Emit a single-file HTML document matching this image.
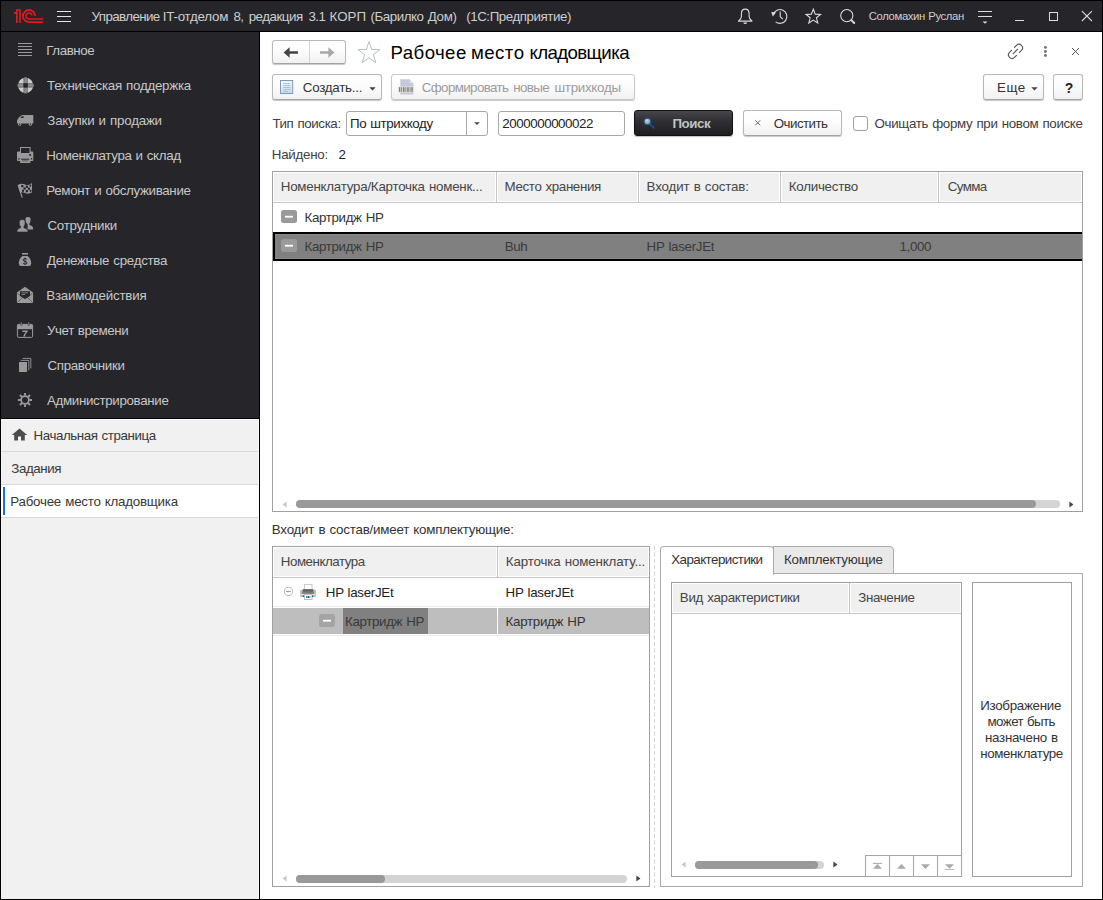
<!DOCTYPE html>
<html lang="ru">
<head>
<meta charset="utf-8">
<title>Рабочее место кладовщика</title>
<style>
*{box-sizing:border-box;margin:0;padding:0}
html,body{width:1103px;height:900px;overflow:hidden;background:#000}
body{font-family:"Liberation Sans",sans-serif;font-size:13px;color:#333;position:relative}
.abs{position:absolute}
#win{position:absolute;left:1px;top:1px;width:1101px;height:898px;background:#fff;overflow:hidden}
/* coordinates inside #win are page coords minus 1 */
#topbar{position:absolute;left:0;top:0;width:1101px;height:30px;background:#25252a}
#topline{position:absolute;left:0;top:30px;width:1101px;height:1px;background:#000}
#side{position:absolute;left:0;top:31px;width:258px;height:386px;background:#25252a}
#sideline{position:absolute;left:0;top:417px;width:258px;height:1px;background:#000}
#sidelow{position:absolute;left:0;top:418px;width:258px;height:480px;background:#f1f1f1;border-top:1px solid #fbfbfb;border-right:1px solid #fbfbfb}
#sideborder{position:absolute;left:258px;top:31px;width:1px;height:867px;background:#000}
.orow{position:absolute;left:0;width:257px;height:33px;border-bottom:1px solid #d9d9d9;font-size:13px;color:#333;line-height:16px;white-space:nowrap}
.t{position:absolute;white-space:pre;line-height:16px}
.btn{position:absolute;border:1px solid #b9b9b9;border-bottom-color:#a2a2a2;border-radius:3px;background:linear-gradient(#ffffff,#fdfdfd 40%,#f1f1f1);box-shadow:0 1px 1px rgba(0,0,0,.22)}
.inp{position:absolute;border:1px solid #a8a8a8;border-radius:3px;background:#fff}
.tbl{position:absolute;border:1px solid #a0a0a0;background:#fff}
</style>
</head>
<body>
<div id="win">
<div id="topbar"></div>
<div id="topline"></div>
<div id="side"></div>
<div id="sideline"></div>
<div id="sidelow"></div>
<div id="sideborder"></div>
<!-- ===== TOP BAR (coords = page-1) ===== -->
<svg class="abs" style="left:0px;top:0px" width="50" height="30" viewBox="1 1 50 30">
 <g fill="none" stroke="#dc1a1f">
  <path d="M16.85 23 V10 H19.95 V23" stroke-width="1.7"/>
  <path d="M13.9 12.9 H16.2" stroke-width="1.9"/>
  <path d="M35.05 16 A6.05 6.05 0 1 0 29 22.1 H43.3" stroke-width="1.85"/>
  <path d="M31.9 15.4 A2.95 2.95 0 1 0 29 18.95 H43.3" stroke-width="1.6"/>
 </g>
</svg>
<div class="abs" style="left:56px;top:10px;width:14px;height:1px;background:#e4e4e4"></div>
<div class="abs" style="left:56px;top:15px;width:14px;height:1px;background:#e4e4e4"></div>
<div class="abs" style="left:56px;top:20px;width:14px;height:1px;background:#e4e4e4"></div>
<!-- icons (page coords) -->
<svg class="abs" style="left:729px;top:0px" width="140" height="30" viewBox="730 1 140 30">
 <g fill="none" stroke="#dcdcdc" stroke-width="1.1" stroke-linejoin="round">
  <path d="M745.2 9.1 C742.9 9.1 741.4 11 741.4 13.6 V16.6 C741.4 18.8 739.6 20 738.5 21.1 H752 C750.9 20 749.1 18.8 749.1 16.6 V13.6 C749.1 11 747.5 9.1 745.2 9.1 Z"/>
  <path d="M773.4 14.5 A6.9 6.9 0 1 1 775.6 21.8"/>
  <path d="M780.2 11.6 V16.6 L782.8 19.2"/>
  <path d="M813.30 9.20 L815.24 14.13 L820.53 14.45 L816.44 17.82 L817.77 22.95 L813.30 20.10 L808.83 22.95 L810.16 17.82 L806.07 14.45 L811.36 14.13 Z" stroke-linejoin="miter"/>
  <circle cx="846.8" cy="15.6" r="6.1"/>
 </g>
 <path d="M743.3 22.4 H747.1 Q747.1 23.9 745.2 23.9 Q743.3 23.9 743.3 22.4 Z" fill="#dcdcdc"/>
 <path d="M771.2 12 L776 12.6 L772.8 16.4 Z" fill="#dcdcdc"/>
 <path d="M851.3 20.1 L854.2 23" stroke="#dcdcdc" stroke-width="2" stroke-linecap="round"/>
</svg>
<!-- menu lines -->
<div class="abs" style="left:977px;top:10px;width:14px;height:1px;background:#dcdcdc"></div>
<div class="abs" style="left:977px;top:15px;width:14px;height:1px;background:#dcdcdc"></div>
<svg class="abs" style="left:980px;top:20px" width="9" height="4" viewBox="0 0 9 4"><path d="M1.5 0.6 H6.5 L4 2.8 Z" fill="#dcdcdc"/></svg>
<!-- minimize -->
<div class="abs" style="left:1014px;top:19px;width:9px;height:1px;background:#dcdcdc"></div>
<!-- maximize -->
<div class="abs" style="left:1048px;top:11px;width:9px;height:9px;border:1px solid #dcdcdc"></div>
<!-- close -->
<svg class="abs" style="left:1080px;top:9px" width="12" height="12" viewBox="0 0 12 12"><path d="M0.9 1.2 L10.9 11 M10.9 1.2 L0.9 11" stroke="#dcdcdc" stroke-width="1.1"/></svg>

<!-- ===== SIDEBAR (coords = page-1) ===== -->
<!-- icons: one svg overlay, viewBox in page coords -->
<svg class="abs" style="left:0;top:31px" width="50" height="386" viewBox="1 32 50 386">
 <!-- list -->
 <g fill="#9a9a9a">
  <rect x="18" y="43" width="14" height="1"/><rect x="18" y="46" width="14" height="1"/><rect x="18" y="49" width="14" height="1"/><rect x="18" y="52" width="14" height="1"/><rect x="18" y="55" width="14" height="1"/>
 </g>
 <!-- lifebuoy -->
 <g>
  <circle cx="25.6" cy="85.4" r="7.7" fill="#cdcdcd"/>
  <rect x="24" y="77.4" width="3.2" height="16" fill="#8c8c8c"/>
  <rect x="17.6" y="83.8" width="16" height="3.2" fill="#8c8c8c"/>
  <g stroke="#25252a" stroke-width="0.6" opacity=".8"><path d="M23.8 77 V94 M27.4 77 V94 M17 83.6 H34 M17 87.2 H34"/></g>
  <rect x="23.5" y="83.3" width="4.2" height="4.2" rx="1" fill="#25252a"/>
 </g>
 <!-- truck -->
 <g fill="#9a9a9a">
  <path d="M22 115 H33.3 V123.6 H17 V120.2 L19.2 117.2 Z"/>
  <circle cx="19.7" cy="124.2" r="1.6"/><circle cx="30.4" cy="124.2" r="1.6"/>
  <path d="M20.4 118 L22 116.2 H23.6 V118 Z" fill="#25252a"/>
  <circle cx="19.7" cy="124.3" r="0.7" fill="#25252a"/><circle cx="30.4" cy="124.3" r="0.7" fill="#25252a"/>
 </g>
 <!-- printer -->
 <g>
  <rect x="20.5" y="147.5" width="9.6" height="6" fill="none" stroke="#9a9a9a" stroke-width="1"/>
  <path d="M18 151.6 H20.8 V153.2 H29.8 V151.6 H32.4 Q33.3 151.6 33.3 152.6 V160 Q33.3 161 32.4 161 H18 Q17 161 17 160 V152.6 Q17 151.6 18 151.6 Z" fill="#9a9a9a"/>
  <rect x="20.1" y="157.6" width="10.3" height="5.4" rx="0.6" fill="#9a9a9a"/>
  <rect x="21.2" y="158.7" width="8" height="1" fill="#25252a"/>
  <rect x="22" y="160.4" width="6.4" height="1" fill="#25252a" opacity=".55"/>
  <rect x="29.3" y="154" width="1.8" height="1.8" fill="#25252a"/>
  <rect x="18.3" y="158.2" width="1.3" height="1.4" fill="#25252a"/><rect x="30.9" y="158.2" width="1.3" height="1.4" fill="#25252a"/>
 </g>
 <!-- flag -->
 <g>
  <path d="M18 185 Q21 182.6 25 184.4 T32 183 V192.6 Q28 194.6 25 193 T20.4 193.2 Z" fill="#9a9a9a"/>
  <path d="M18.1 185 L22.2 197.6" stroke="#9a9a9a" stroke-width="1.1" fill="none"/>
  <g fill="#25252a">
   <rect x="21.2" y="185" width="2.2" height="2.2"/><rect x="25.8" y="185.6" width="2.2" height="2.2"/><rect x="29.6" y="184.6" width="1.6" height="2"/>
   <rect x="23.4" y="187.4" width="2.3" height="2.2"/><rect x="27.8" y="187.6" width="2.2" height="2.2"/>
   <rect x="22" y="189.8" width="2" height="2"/><rect x="25.8" y="190" width="2.2" height="2.2"/><rect x="29.8" y="189.8" width="1.6" height="2"/>
  </g>
 </g>
 <!-- people -->
 <g fill="#9a9a9a">
  <path d="M25.4 219.4 Q25.4 217 28 217 Q30.6 217 30.6 219.4 Q30.6 222.4 29.4 223.6 V225 Q33 226 33 228 V229.4 H27.6 V224.6 Q25.4 222.6 25.4 219.4 Z"/>
  <path d="M19.2 222.2 Q19.2 219.4 22.2 219.4 Q25.2 219.4 25.2 222.2 Q25.2 225.4 23.9 226.6 V227.8 Q28 228.8 28 231 V232 H17 V231 Q17 228.8 20.5 227.8 V226.6 Q19.2 225.4 19.2 222.2 Z" stroke="#25252a" stroke-width="0.6"/>
 </g>
 <!-- money bag -->
 <g fill="#9a9a9a">
  <rect x="22" y="253" width="6" height="1.6"/>
  <path d="M22.4 256 H27.6 Q31.2 259 31.2 263.4 Q31.2 266 29 266 H21 Q18.8 266 18.8 263.4 Q18.8 259 22.4 256 Z"/>
  <g fill="none" stroke="#25252a" stroke-width="0.95"><path d="M26.9 259.6 Q26.6 258.6 25 258.6 Q23.2 258.6 23.2 259.9 Q23.2 261 25 261.3 Q26.9 261.6 26.9 262.8 Q26.9 264.1 25 264.1 Q23.3 264.1 23 263"/><path d="M25 257.6 V265.1" stroke-width="0.8"/></g>
 </g>
 <!-- envelope -->
 <g>
  <path d="M25 286.8 L33.1 292.4 V302 Q33.1 303 32.1 303 H17.9 Q16.9 303 16.9 302 V292.4 Z" fill="#9a9a9a"/>
  <path d="M20 291.2 H30 V296 L25 299 L20 296 Z" fill="#25252a"/>
  <rect x="21.6" y="292.4" width="6.4" height="0.9" fill="#8a8a8a"/><rect x="21.6" y="294.1" width="3.4" height="0.9" fill="#8a8a8a"/>
  <path d="M17.6 293.6 L25 298.4 L32.4 293.6 M17.6 302.2 L22.6 297.4 M32.4 302.2 L27.4 297.4" stroke="#25252a" stroke-width="0.6" fill="none" opacity=".8"/>
 </g>
 <!-- calendar -->
 <g>
  <rect x="17.4" y="324.4" width="15.2" height="13" rx="1.2" fill="none" stroke="#9a9a9a" stroke-width="1"/>
  <rect x="17.4" y="324.4" width="15.2" height="4.8" fill="#9a9a9a"/>
  <rect x="20.6" y="322" width="1.4" height="3.6" rx=".7" fill="#9a9a9a" stroke="#25252a" stroke-width=".5"/>
  <rect x="28" y="322" width="1.4" height="3.6" rx=".7" fill="#9a9a9a" stroke="#25252a" stroke-width=".5"/>
  <path d="M22.4 330.4 H27.8 V331.6 Q25.6 333.6 25 336.4 H23.2 Q23.9 333.8 25.8 332 H22.4 Z" fill="#9a9a9a"/>
 </g>
 <!-- docs -->
 <g>
  <rect x="19" y="362" width="8" height="10" fill="#9a9a9a"/>
  <path d="M20.6 360.4 H28.8 V370.4" fill="none" stroke="#9a9a9a" stroke-width="0.9"/>
  <path d="M22.6 358.4 H30.8 V368.4" fill="none" stroke="#9a9a9a" stroke-width="0.9"/>
 </g>
 <!-- gear -->
 <g stroke="#9a9a9a" fill="none">
  <circle cx="25" cy="400" r="3.9" stroke-width="1.8"/>
  <path d="M29.40 400.00 L32.10 400.00 M28.11 403.11 L30.02 405.02 M25.00 404.40 L25.00 407.10 M21.89 403.11 L19.98 405.02 M20.60 400.00 L17.90 400.00 M21.89 396.89 L19.98 394.98 M25.00 395.60 L25.00 392.90 M28.11 396.89 L30.02 394.98" stroke-width="1.9"/>
 </g>
</svg>
<!-- open windows list -->
<div class="orow" style="top:418px"></div>
<div class="orow" style="top:451px"></div>
<div class="orow" style="top:484px;background:#fff"></div>
<div class="abs" style="left:2px;top:486px;width:2px;height:28px;background:#1576cf"></div>
<svg class="abs" style="left:10px;top:427px" width="17" height="13" viewBox="0 0 17 13"><path d="M8.5 0.4 L16.2 7 H13.8 V12.6 H10 V8.4 H7 V12.6 H3.2 V7 H0.8 Z" fill="#4d4d4d"/></svg>

<!-- ===== MAIN (coords = page-1) ===== -->
<!-- nav buttons -->
<div class="btn" style="left:271px;top:39px;width:74px;height:24px"></div>
<div class="abs" style="left:308px;top:40px;width:1px;height:22px;background:#d4d4d4"></div>
<svg class="abs" style="left:282px;top:45px" width="16" height="13" viewBox="0 0 16 13"><path d="M0.6 6.5 L6.6 1.2 V5.3 H15 V7.7 H6.6 V11.8 Z" fill="#444"/></svg>
<svg class="abs" style="left:318px;top:45px" width="16" height="13" viewBox="0 0 16 13"><path d="M15.4 6.5 L9.4 1.2 V5.3 H1 V7.7 H9.4 V11.8 Z" fill="#a8a8a8"/></svg>
<!-- star -->
<svg class="abs" style="left:354px;top:38px" width="30" height="28" viewBox="355 39 30 28"><path d="M369.00 41.60 L371.70 49.48 L380.03 49.62 L373.37 54.62 L375.82 62.58 L369.00 57.80 L362.18 62.58 L364.63 54.62 L357.97 49.62 L366.30 49.48 Z" fill="#fff" stroke="#b9c0c8" stroke-width="1"/></svg>
<!-- link / dots / close -->
<svg class="abs" style="left:1003px;top:39px" width="82" height="24" viewBox="1004 40 82 24">
 <g transform="translate(1015.5 51.35) rotate(-45)" fill="none" stroke="#585858" stroke-width="1.15" stroke-linecap="round">
  <path d="M2.1 -3.5 H4.9 A3.5 3.5 0 0 1 4.9 3.5 H2.1"/>
  <path d="M-2.1 -3.5 H-4.9 A3.5 3.5 0 0 0 -4.9 3.5 H-2.1"/>
  <path d="M-3.3 0 H3.1"/>
 </g>
 <g fill="#757575"><circle cx="1045.4" cy="47.4" r="1.45"/><circle cx="1045.4" cy="51.5" r="1.45"/><circle cx="1045.4" cy="55.5" r="1.45"/></g>
 <path d="M1072 48 L1079 55 M1079 48 L1072 55" stroke="#555" stroke-width="1"/>
</svg>

<!-- toolbar row -->
<div class="btn" style="left:271px;top:73px;width:110px;height:26px"></div>
<svg class="abs" style="left:278px;top:78px" width="17" height="18" viewBox="279 79 17 18">
 <defs><linearGradient id="dg" x1="0" y1="0" x2="0.3" y2="1"><stop offset="0" stop-color="#ffffff"/><stop offset="1" stop-color="#c9dcec"/></linearGradient></defs>
 <rect x="280.5" y="80.5" width="12.2" height="13" fill="url(#dg)" stroke="#7d9ab8" stroke-width="1"/>
 <g stroke="#a9bccd" stroke-width="0.9"><path d="M283 83.5 H290.4 M283 85.5 H290.4 M283 87.5 H290.4 M283 89.5 H290.4 M283 91.5 H288"/></g>
</svg>
<svg class="abs" style="left:368px;top:86px" width="7" height="4" viewBox="0 0 7 4"><path d="M0.3 0.3 H6.7 L3.5 3.6 Z" fill="#444"/></svg>
<div class="btn" style="left:390px;top:73px;width:244px;height:26px;border-color:#c8c8c8"></div>
<svg class="abs" style="left:396px;top:77px" width="20" height="20" viewBox="397 78 20 20">
 <path d="M400.3 79.2 H409.6 L413.3 83 V94.6 H400.3 Z" fill="#c3cbd6"/>
 <path d="M409.6 79.2 V83 H413.3 Z" fill="#dfe4ea"/>
 <rect x="398" y="86.4" width="16.2" height="6" fill="#e3e1dc"/>
 <g fill="#7e7e7e"><rect x="399" y="87.2" width="1.3" height="4.6"/><rect x="401.2" y="87.2" width="0.9" height="4.6"/><rect x="403" y="87.2" width="1.5" height="4.6"/><rect x="405.4" y="87.2" width="0.9" height="4.6"/><rect x="407.2" y="87.2" width="1.5" height="4.6"/><rect x="409.6" y="87.2" width="0.9" height="4.6"/><rect x="411.3" y="87.2" width="1.4" height="4.6"/></g>
</svg>
<div class="btn" style="left:982px;top:73px;width:61px;height:26px"></div>
<svg class="abs" style="left:1030px;top:86px" width="7" height="4" viewBox="0 0 7 4"><path d="M0.3 0.3 H6.7 L3.5 3.6 Z" fill="#444"/></svg>
<div class="btn" style="left:1052px;top:73px;width:30px;height:26px"></div>

<!-- search row -->
<div class="inp" style="left:345px;top:110px;width:142px;height:25px"></div>
<div class="abs" style="left:465px;top:111px;width:1px;height:23px;background:#a8a8a8"></div>
<svg class="abs" style="left:473px;top:121px" width="6" height="3" viewBox="0 0 6 3"><path d="M0.2 0.2 H5.8 L3 2.9 Z" fill="#444"/></svg>
<div class="inp" style="left:497px;top:110px;width:127px;height:25px"></div>
<div class="abs" style="left:633px;top:109px;width:99px;height:26px;border:1px solid #111;border-radius:3px;background:linear-gradient(#47474b,#303034 40%,#1e1e22);box-shadow:0 1px 1px rgba(0,0,0,.25)"></div>
<svg class="abs" style="left:640px;top:114px" width="18" height="18" viewBox="641 115 18 18">
 <defs><radialGradient id="lg" cx="0.4" cy="0.35" r="0.7"><stop offset="0" stop-color="#d2d2d2"/><stop offset="1" stop-color="#8a8a8a"/></radialGradient></defs>
 <path d="M649.6 123.6 L653.9 127.8" stroke="#0f5590" stroke-width="1.7" stroke-linecap="round"/>
 <circle cx="647.4" cy="121.5" r="3.3" fill="url(#lg)" stroke="#115a98" stroke-width="1.1"/>
</svg>
<div class="btn" style="left:742px;top:109px;width:99px;height:26px"></div>
<svg class="abs" style="left:753px;top:118px" width="8" height="8" viewBox="0 0 8 8"><path d="M1.4 1.4 L6.2 6.2 M6.2 1.4 L1.4 6.2" stroke="#5a5a5a" stroke-width="0.9"/></svg>
<div class="abs" style="left:852px;top:115px;width:15px;height:15px;border:1px solid #a0a0a0;border-radius:3px;background:#fff"></div>

<!-- table 1 -->
<div class="tbl" style="left:271px;top:170px;width:811px;height:341px"></div>
<div class="abs" style="left:272px;top:171px;width:809px;height:31px;background:#c6c6c6"></div>
<div class="abs" style="left:272px;top:171px;width:223px;height:30px;background:#f0f0f0;border:1px solid #fff"></div>
<div class="abs" style="left:496px;top:171px;width:141px;height:30px;background:#f0f0f0;border:1px solid #fff"></div>
<div class="abs" style="left:638px;top:171px;width:141px;height:30px;background:#f0f0f0;border:1px solid #fff"></div>
<div class="abs" style="left:780px;top:171px;width:157px;height:30px;background:#f0f0f0;border:1px solid #fff"></div>
<div class="abs" style="left:938px;top:171px;width:143px;height:30px;background:#f0f0f0;border:1px solid #fff"></div>
<!-- row 1 -->
<svg class="abs" style="left:280px;top:209px" width="16" height="13" viewBox="0 0 16 13"><rect x="0" y="0" width="16" height="13" rx="2.5" fill="#9a9a9a"/><rect x="4" y="5.8" width="8" height="1.8" fill="#fff"/></svg>
<!-- row 2 selected -->
<div class="abs" style="left:272px;top:231px;width:809px;height:29px;background:#808080;border:2px solid #000;border-right:0;box-shadow:inset 0 1px 0 #8a8a8a,inset 0 -1px 0 #8a8a8a"></div>
<svg class="abs" style="left:280px;top:238px" width="16" height="13" viewBox="0 0 16 13"><rect x="0" y="0" width="16" height="13" rx="2.5" fill="#9a9a9a"/><rect x="4" y="5.8" width="8" height="1.8" fill="#fff"/></svg>
<!-- scrollbar 1 -->
<svg class="abs" style="left:281px;top:500px" width="5" height="7" viewBox="0 0 5 7"><path d="M4.6 0.4 V6.6 L0.6 3.5 Z" fill="#c8c8c8"/></svg>
<div class="abs" style="left:295px;top:499px;width:764px;height:8px;border-radius:4px;background:#d4d4d4"></div>
<div class="abs" style="left:295px;top:499px;width:740px;height:8px;border-radius:4px;background:#999"></div>
<svg class="abs" style="left:1068px;top:500px" width="5" height="7" viewBox="0 0 5 7"><path d="M0.4 0.4 V6.6 L4.4 3.5 Z" fill="#444"/></svg>


<!-- table 2 -->
<div class="tbl" style="left:271px;top:545px;width:378px;height:341px"></div>
<div class="abs" style="left:272px;top:546px;width:376px;height:31px;background:#c6c6c6"></div>
<div class="abs" style="left:272px;top:546px;width:224px;height:30px;background:#f0f0f0;border:1px solid #fff"></div>
<div class="abs" style="left:497px;top:546px;width:151px;height:30px;background:#f0f0f0;border:1px solid #fff"></div>
<!-- row 1 -->
<svg class="abs" style="left:282px;top:585px" width="12" height="12" viewBox="283 586 12 12"><circle cx="288.5" cy="591.4" r="4.1" fill="#fff" stroke="#b4b4b4" stroke-width="1"/><path d="M286 591.4 H291" stroke="#999" stroke-width="1"/></svg>
<svg class="abs" style="left:298px;top:582px" width="20" height="19" viewBox="299 583 20 19">
 <defs><linearGradient id="pg" x1="0" y1="0" x2="0" y2="1"><stop offset="0" stop-color="#4e4e4e"/><stop offset="1" stop-color="#8e8e8e"/></linearGradient></defs>
 <rect x="304.4" y="584.4" width="7.6" height="6" fill="#fff" stroke="#c4c4c4" stroke-width="0.9"/>
 <path d="M301.6 589.4 H314.4 Q316 589.4 316 591 V596 Q316 597 315 597 H301 Q300 597 300 596 V591 Q300 589.4 301.6 589.4 Z" fill="#b9c0c8"/>
 <path d="M303 589.2 H313 L314.2 594 H301.8 Z" fill="url(#pg)"/>
 <rect x="300.6" y="594" width="14.8" height="1" fill="#dfe3e8"/>
 <rect x="304.4" y="594.6" width="7.6" height="5" fill="#fff" stroke="#b4b4b4" stroke-width="0.9"/>
 <rect x="306" y="596" width="1.6" height="2" fill="#2b8fe0"/><rect x="307.8" y="596" width="1.6" height="2" fill="#1f7a46"/><rect x="309.4" y="596" width="1" height="2" fill="#3aa0e0"/>
 <rect x="314" y="592.4" width="1.2" height="1.2" fill="#7fe36a"/>
 <path d="M302.6 596.8 L303.6 595 L304 596.8 Z M313.4 596.8 L312.4 595 L312 596.8 Z" fill="#222"/>
</svg>
<div class="abs" style="left:272px;top:605px;width:376px;height:1px;background:#ececec"></div>
<!-- row 2 -->
<div class="abs" style="left:272px;top:607px;width:376px;height:26px;background:#bebebe"></div>
<div class="abs" style="left:342px;top:607px;width:85px;height:26px;background:#808080"></div>
<div class="abs" style="left:496px;top:577px;width:1px;height:58px;background:#fff"></div>
<div class="abs" style="left:272px;top:634px;width:376px;height:1px;background:#ececec"></div>
<svg class="abs" style="left:318px;top:613px" width="16" height="13" viewBox="0 0 16 13"><rect x="0" y="0" width="16" height="13" rx="3" fill="#a4a4a4"/><rect x="4" y="5.8" width="8" height="1.8" fill="#fff"/></svg>
<!-- scrollbar 2 -->
<svg class="abs" style="left:281px;top:874px" width="5" height="7" viewBox="0 0 5 7"><path d="M4.6 0.4 V6.6 L0.6 3.5 Z" fill="#c8c8c8"/></svg>
<div class="abs" style="left:295px;top:874px;width:331px;height:8px;border-radius:4px;background:#d4d4d4"></div>
<div class="abs" style="left:295px;top:874px;width:89px;height:8px;border-radius:4px;background:#999"></div>
<svg class="abs" style="left:635px;top:874px" width="5" height="7" viewBox="0 0 5 7"><path d="M0.4 0.4 V6.6 L4.4 3.5 Z" fill="#444"/></svg>

<!-- splitter -->
<svg class="abs" style="left:653px;top:545px" width="1" height="342" viewBox="0 0 1 342"><path d="M0.5 0 V342" stroke="#d2d2d2" stroke-width="1" stroke-dasharray="4 2.4"/></svg>

<!-- tabs -->
<div class="abs" style="left:659px;top:572px;width:423px;height:314px;border:1px solid #ababab;background:#fff"></div>
<div class="abs" style="left:772px;top:545px;width:121px;height:28px;border:1px solid #ababab;border-radius:0 4px 0 0;background:#e9e9e9"></div>
<div class="abs" style="left:659px;top:545px;width:114px;height:29px;border:1px solid #ababab;border-bottom:0;border-radius:4px 4px 0 0;background:#fff"></div>
<!-- inner table -->
<div class="tbl" style="left:670px;top:581px;width:291px;height:295px"></div>
<div class="abs" style="left:671px;top:582px;width:289px;height:31px;background:#c6c6c6"></div>
<div class="abs" style="left:671px;top:582px;width:177px;height:30px;background:#f0f0f0;border:1px solid #fff"></div>
<div class="abs" style="left:849px;top:582px;width:111px;height:30px;background:#f0f0f0;border:1px solid #fff"></div>
<!-- inner scrollbar -->
<svg class="abs" style="left:680px;top:860px" width="5" height="7" viewBox="0 0 5 7"><path d="M4.6 0.4 V6.6 L0.6 3.5 Z" fill="#c8c8c8"/></svg>
<div class="abs" style="left:694px;top:860px;width:129px;height:8px;border-radius:4px;background:#d4d4d4"></div>
<div class="abs" style="left:694px;top:860px;width:123px;height:8px;border-radius:4px;background:#999"></div>
<svg class="abs" style="left:832px;top:860px" width="5" height="7" viewBox="0 0 5 7"><path d="M0.4 0.4 V6.6 L4.4 3.5 Z" fill="#444"/></svg>
<!-- inner nav buttons -->
<div class="abs" style="left:864px;top:854px;width:97px;height:22px;background:#fff;border:1px solid #a6a6a6"></div>
<div class="abs" style="left:888px;top:855px;width:1px;height:20px;background:#a6a6a6"></div>
<div class="abs" style="left:912px;top:855px;width:1px;height:20px;background:#a6a6a6"></div>
<div class="abs" style="left:936px;top:855px;width:1px;height:20px;background:#a6a6a6"></div>
<svg class="abs" style="left:865px;top:855px" width="96" height="20" viewBox="0 0 96 20">
 <g fill="#a9a9a9">
  <rect x="7" y="6.9" width="9" height="1"/><path d="M11.5 8 L16 12.8 H7 Z"/>
  <path d="M35.5 8 L40 12.8 H31 Z"/>
  <path d="M59.5 12.9 L64 8.2 H55 Z"/>
  <path d="M83.5 12.8 L88 8.2 H79 Z"/><rect x="79" y="13" width="9" height="1" opacity=".8"/>
 </g>
</svg>
<!-- image box -->
<div class="tbl" style="left:971px;top:581px;width:100px;height:295px"></div>

<!-- texts -->
<div class="t" style="left:90.60px;top:8px;font-size:13.33px;line-height:16px;color:#cecece;letter-spacing:-0.600px">Управление</div>
<div class="t" style="left:161.80px;top:8px;font-size:13.33px;line-height:16px;color:#cecece;letter-spacing:-0.224px">IT-отделом</div>
<div class="t" style="left:232.40px;top:8px;font-size:13.33px;line-height:16px;color:#cecece;letter-spacing:-0.600px">8,</div>
<div class="t" style="left:247.70px;top:8px;font-size:13.33px;line-height:16px;color:#cecece;letter-spacing:-0.476px">редакция</div>
<div class="t" style="left:307.40px;top:8px;font-size:13.33px;line-height:16px;color:#cecece;letter-spacing:-0.558px">3.1</div>
<div class="t" style="left:328.50px;top:8px;font-size:13.33px;line-height:16px;color:#cecece;letter-spacing:0.043px">КОРП</div>
<div class="t" style="left:369.60px;top:8px;font-size:13.33px;line-height:16px;color:#cecece;letter-spacing:-0.459px">(Барилко</div>
<div class="t" style="left:426.70px;top:8px;font-size:13.33px;line-height:16px;color:#cecece;letter-spacing:-0.284px">Дом)</div>
<div class="t" style="left:465.20px;top:8px;font-size:13.33px;line-height:16px;color:#cecece;letter-spacing:-0.435px">(1С:Предприятие)</div>
<div class="t" style="left:867.80px;top:7px;font-size:11.33px;line-height:16px;color:#cecece;letter-spacing:-0.395px;word-spacing:0.7px">Соломахин Руслан</div>
<div class="t" style="left:45.30px;top:42px;font-size:13.33px;line-height:16px;color:#c8c8c8;letter-spacing:-0.419px">Главное</div>
<div class="t" style="left:46.00px;top:77px;font-size:13.33px;line-height:16px;color:#c8c8c8;letter-spacing:-0.256px;word-spacing:0.7px">Техническая поддержка</div>
<div class="t" style="left:46.30px;top:112px;font-size:13.33px;line-height:16px;color:#c8c8c8;letter-spacing:-0.213px;word-spacing:0.7px">Закупки и продажи</div>
<div class="t" style="left:45.30px;top:147px;font-size:13.33px;line-height:16px;color:#c8c8c8;letter-spacing:-0.349px;word-spacing:0.7px">Номенклатура и склад</div>
<div class="t" style="left:45.30px;top:182px;font-size:13.33px;line-height:16px;color:#c8c8c8;letter-spacing:-0.323px;word-spacing:0.7px">Ремонт и обслуживание</div>
<div class="t" style="left:46.50px;top:217px;font-size:13.33px;line-height:16px;color:#c8c8c8;letter-spacing:-0.272px">Сотрудники</div>
<div class="t" style="left:46.00px;top:252px;font-size:13.33px;line-height:16px;color:#c8c8c8;letter-spacing:-0.275px;word-spacing:0.7px">Денежные средства</div>
<div class="t" style="left:45.30px;top:287px;font-size:13.33px;line-height:16px;color:#c8c8c8;letter-spacing:-0.228px">Взаимодействия</div>
<div class="t" style="left:46.00px;top:322px;font-size:13.33px;line-height:16px;color:#c8c8c8;letter-spacing:-0.403px;word-spacing:0.7px">Учет времени</div>
<div class="t" style="left:46.50px;top:357px;font-size:13.33px;line-height:16px;color:#c8c8c8;letter-spacing:-0.340px">Справочники</div>
<div class="t" style="left:46.00px;top:392px;font-size:13.33px;line-height:16px;color:#c8c8c8;letter-spacing:-0.330px">Администрирование</div>
<div class="t" style="left:32.50px;top:427px;font-size:13.33px;line-height:16px;color:#383838;letter-spacing:-0.415px;word-spacing:0.7px">Начальная страница</div>
<div class="t" style="left:10.30px;top:460px;font-size:13.33px;line-height:16px;color:#383838;letter-spacing:-0.426px">Задания</div>
<div class="t" style="left:9.30px;top:493px;font-size:13.33px;line-height:16px;color:#383838;letter-spacing:-0.233px;word-spacing:0.7px">Рабочее место кладовщика</div>
<div class="t" style="left:389.60px;top:40px;font-size:18.67px;line-height:24px;color:#000;letter-spacing:0.392px">Рабочее</div>
<div class="t" style="left:469.90px;top:40px;font-size:18.67px;line-height:24px;color:#000;letter-spacing:0.484px">место</div>
<div class="t" style="left:528.40px;top:40px;font-size:18.67px;line-height:24px;color:#000;letter-spacing:-0.600px">кладовщика</div>
<div class="t" style="left:301.80px;top:79px;font-size:13.33px;line-height:16px;color:#333333;letter-spacing:-0.240px">Создать...</div>
<div class="t" style="left:420.70px;top:79px;font-size:13.33px;line-height:16px;color:#9c9c9c;letter-spacing:-0.600px">Сформировать</div>
<div class="t" style="left:512.30px;top:79px;font-size:13.33px;line-height:16px;color:#9c9c9c;letter-spacing:-0.600px">новые</div>
<div class="t" style="left:553.40px;top:79px;font-size:13.33px;line-height:16px;color:#9c9c9c;letter-spacing:-0.274px">штрихкоды</div>
<div class="t" style="left:996.00px;top:79px;font-size:13.33px;line-height:16px;color:#333333;letter-spacing:0.497px">Еще</div>
<div class="t" style="left:1063.80px;top:79px;font-size:14px;line-height:16px;color:#222;letter-spacing:0.000px;font-weight:bold">?</div>
<div class="t" style="left:271.40px;top:115px;font-size:13.33px;line-height:16px;color:#404040;letter-spacing:-0.390px;word-spacing:0.7px">Тип поиска:</div>
<div class="t" style="left:349.00px;top:115px;font-size:13.33px;line-height:16px;color:#222;letter-spacing:-0.372px;word-spacing:0.7px">По штрихкоду</div>
<div class="t" style="left:501.30px;top:115px;font-size:13.33px;line-height:16px;color:#222;letter-spacing:-0.437px">2000000000022</div>
<div class="t" style="left:671.40px;top:115px;font-size:13.33px;line-height:16px;color:#c2c2c2;letter-spacing:-0.432px;font-weight:bold">Поиск</div>
<div class="t" style="left:772.80px;top:115px;font-size:13.33px;line-height:16px;color:#333333;letter-spacing:-0.553px">Очистить</div>
<div class="t" style="left:873.50px;top:115px;font-size:13.33px;line-height:16px;color:#404040;letter-spacing:-0.322px;word-spacing:0.7px">Очищать форму при новом поиске</div>
<div class="t" style="left:270.80px;top:146px;font-size:13.33px;line-height:16px;color:#404040;letter-spacing:-0.264px">Найдено:</div>
<div class="t" style="left:337.40px;top:146px;font-size:13.33px;line-height:16px;color:#222;letter-spacing:0.000px">2</div>
<div class="t" style="left:279.80px;top:178px;font-size:13.33px;line-height:16px;color:#454545;letter-spacing:-0.238px;word-spacing:0.7px">Номенклатура/Карточка номенк...</div>
<div class="t" style="left:503.60px;top:178px;font-size:13.33px;line-height:16px;color:#454545;letter-spacing:-0.367px;word-spacing:0.7px">Место хранения</div>
<div class="t" style="left:645.60px;top:178px;font-size:13.33px;line-height:16px;color:#454545;letter-spacing:-0.148px;word-spacing:0.7px">Входит в состав:</div>
<div class="t" style="left:787.80px;top:178px;font-size:13.33px;line-height:16px;color:#454545;letter-spacing:-0.251px">Количество</div>
<div class="t" style="left:946.80px;top:178px;font-size:13.33px;line-height:16px;color:#454545;letter-spacing:-0.600px">Сумма</div>
<div class="t" style="left:303.60px;top:209px;font-size:13.33px;line-height:16px;color:#333333;letter-spacing:-0.358px;word-spacing:0.7px">Картридж HP</div>
<div class="t" style="left:303.60px;top:238px;font-size:13.33px;line-height:16px;color:#3a3a3a;letter-spacing:-0.358px;word-spacing:0.7px">Картридж HP</div>
<div class="t" style="left:503.80px;top:238px;font-size:13.33px;line-height:16px;color:#3a3a3a;letter-spacing:-0.401px">Buh</div>
<div class="t" style="left:645.60px;top:238px;font-size:13.33px;line-height:16px;color:#3a3a3a;letter-spacing:-0.296px;word-spacing:0.7px">HP laserJEt</div>
<div class="t" style="left:898.60px;top:238px;font-size:13.33px;line-height:16px;color:#3a3a3a;letter-spacing:-0.410px">1,000</div>
<div class="t" style="left:270.80px;top:521px;font-size:13.33px;line-height:16px;color:#333333;letter-spacing:-0.209px;word-spacing:0.7px">Входит в состав/имеет комплектующие:</div>
<div class="t" style="left:279.80px;top:553px;font-size:13.33px;line-height:16px;color:#454545;letter-spacing:-0.467px">Номенклатура</div>
<div class="t" style="left:504.80px;top:553px;font-size:13.33px;line-height:16px;color:#454545;letter-spacing:-0.149px;word-spacing:0.7px">Карточка номенклату...</div>
<div class="t" style="left:324.80px;top:584px;font-size:13.33px;line-height:16px;color:#222;letter-spacing:-0.296px;word-spacing:0.7px">HP laserJEt</div>
<div class="t" style="left:504.60px;top:584px;font-size:13.33px;line-height:16px;color:#222;letter-spacing:-0.266px;word-spacing:0.7px">HP laserJEt</div>
<div class="t" style="left:344.00px;top:613px;font-size:13.33px;line-height:16px;color:#383838;letter-spacing:-0.348px;word-spacing:0.7px">Картридж HP</div>
<div class="t" style="left:504.60px;top:613px;font-size:13.33px;line-height:16px;color:#333333;letter-spacing:-0.288px;word-spacing:0.7px">Картридж HP</div>
<div class="t" style="left:670.20px;top:551px;font-size:13.33px;line-height:16px;color:#333333;letter-spacing:-0.537px">Характеристики</div>
<div class="t" style="left:783.00px;top:551px;font-size:13.33px;line-height:16px;color:#333333;letter-spacing:-0.204px">Комплектующие</div>
<div class="t" style="left:678.80px;top:589px;font-size:13.33px;line-height:16px;color:#454545;letter-spacing:-0.277px;word-spacing:0.7px">Вид характеристики</div>
<div class="t" style="left:857.30px;top:589px;font-size:13.33px;line-height:16px;color:#454545;letter-spacing:-0.356px">Значение</div>
<div class="t" style="left:979.20px;top:697px;font-size:13.33px;line-height:16px;color:#333333;letter-spacing:-0.275px">Изображение</div>
<div class="t" style="left:986.50px;top:713px;font-size:13.33px;line-height:16px;color:#333333;letter-spacing:-0.571px;word-spacing:0.7px">может быть</div>
<div class="t" style="left:984.00px;top:729px;font-size:13.33px;line-height:16px;color:#333333;letter-spacing:-0.275px;word-spacing:0.7px">назначено в</div>
<div class="t" style="left:979.30px;top:745px;font-size:13.33px;line-height:16px;color:#333333;letter-spacing:-0.388px">номенклатуре</div>

</div>
</body>
</html>
